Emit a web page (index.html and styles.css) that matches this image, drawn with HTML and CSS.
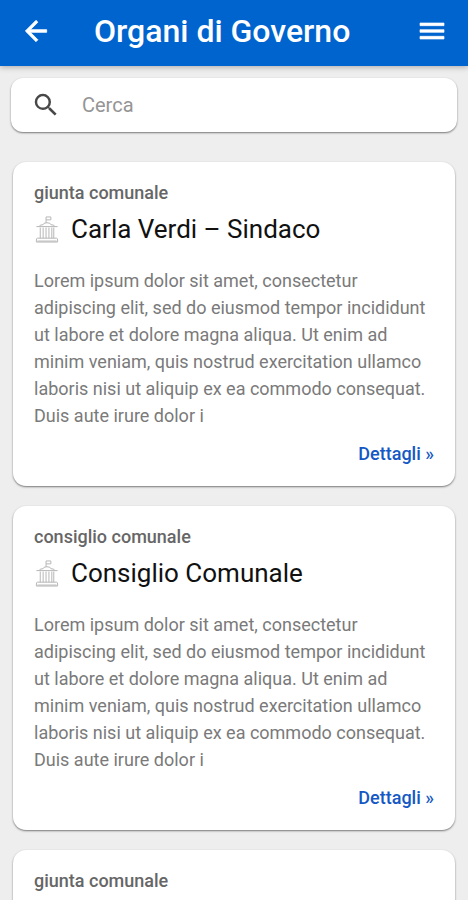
FILE: index.html
```html
<!DOCTYPE html>
<html lang="it">
<head>
  <meta charset="UTF-8">
  <meta name="viewport" content="width=device-width, initial-scale=1">
  <title>Organi di Governo</title>
  <link rel="stylesheet" href="styles.css">
</head>
<body>
  <svg class="sprite" aria-hidden="true">
    <symbol id="palazzo" viewBox="0 0 24 28">
      <path d="M11 7V1h5v3h-5M4 11q0-2 4-2 0-2 4-2t4 2q4 0 4 2M1 11h22M5 12v11M8 12v11M11 12v11M14 12v11M17 12v11M19 12v11M2 23h20q1 0 1 2v2H1v-2q0-2 1-2zM2 26h20"/>
    </symbol>
  </svg>

  <header class="topbar">
    <button class="icon-btn" aria-label="Indietro">
      <svg width="32" height="32" viewBox="0 0 24 24"><path fill="currentColor" stroke="currentColor" stroke-width=".6" d="M20 11H7.83l5.59-5.59L12 4l-8 8 8 8 1.41-1.41L7.83 13H20v-2z"/></svg>
    </button>
    <h1>Organi di Governo</h1>
    <button class="icon-btn" aria-label="Menu">
      <svg width="32" height="32" viewBox="0 0 24 24"><path fill="currentColor" stroke="currentColor" stroke-width=".5" d="M3 18h18v-2H3v2zm0-5h18v-2H3v2zm0-7v2h18V6H3z"/></svg>
    </button>
  </header>

  <main>
    <form class="search">
      <svg width="30" height="30" viewBox="0 0 24 24" aria-hidden="true"><path fill="currentColor" d="M15.5 14h-.79l-.28-.27A6.47 6.47 0 0 0 16 9.5 6.5 6.5 0 1 0 9.5 16c1.61 0 3.09-.59 4.23-1.57l.27.28v.79l5 4.99L20.49 19l-4.99-5zm-6 0C7.01 14 5 11.99 5 9.5S7.01 5 9.5 5 14 7.01 14 9.5 11.99 14 9.5 14z"/></svg>
      <input type="search" placeholder="Cerca" aria-label="Cerca">
    </form>

    <div class="cards">
      <article class="card">
        <div class="category">giunta comunale</div>
        <h2><svg class="palazzo"><use href="#palazzo"/></svg>Carla Verdi – Sindaco</h2>
        <p>Lorem ipsum dolor sit amet, consectetur adipiscing elit, sed do eiusmod tempor incididunt ut labore et dolore magna aliqua. Ut enim ad minim veniam, quis nostrud exercitation ullamco laboris nisi ut aliquip ex ea commodo consequat. Duis aute irure dolor i</p>
        <a class="details" href="#">Dettagli »</a>
      </article>

      <article class="card">
        <div class="category">consiglio comunale</div>
        <h2><svg class="palazzo"><use href="#palazzo"/></svg>Consiglio Comunale</h2>
        <p>Lorem ipsum dolor sit amet, consectetur adipiscing elit, sed do eiusmod tempor incididunt ut labore et dolore magna aliqua. Ut enim ad minim veniam, quis nostrud exercitation ullamco laboris nisi ut aliquip ex ea commodo consequat. Duis aute irure dolor i</p>
        <a class="details" href="#">Dettagli »</a>
      </article>

      <article class="card">
        <div class="category">giunta comunale</div>
      </article>
    </div>
  </main>
</body>
</html>
```

FILE: styles.css
```css
* {
  box-sizing: border-box;
}
body {
  margin: 0;
  height: 100vh;
  display: flex;
  flex-direction: column;
  background: #eee;
  font-family: Roboto, "Liberation Sans", sans-serif;
}
.sprite {
  display: none;
}
.topbar {
  display: flex;
  align-items: center;
  flex: none;
  height: 66px;
  padding: 0 20px 4px;
  background: #0064cf;
  color: #fff;
  box-shadow: 0 1px 6px rgba(0, 0, 0, 0.3);
  z-index: 1;
}
.topbar h1 {
  flex: 1;
  margin: 0 0 0 42px;
  font-size: 32px;
  font-weight: 500;
  line-height: 40px;
}
.icon-btn {
  display: flex;
  padding: 0;
  border: 0;
  background: none;
  color: inherit;
}
main {
  flex: 1;
  overflow-y: auto;
  scrollbar-width: none;
  padding: 12px 11px 0;
}
.search {
  display: flex;
  align-items: center;
  height: 54px;
  padding: 0 20px;
  border-radius: 12px;
  background: #fff;
  color: #484848;
  box-shadow: 0 1px 2px rgba(0, 0, 0, 0.5);
}
.search input {
  flex: 1;
  min-width: 0;
  margin-left: 21px;
  padding: 0;
  border: 0;
  outline: 0;
  background: none;
  color: #333;
  font-family: inherit;
  font-size: 20px;
}
.search input::placeholder {
  color: #959595;
}
.cards {
  display: flex;
  flex-direction: column;
  gap: 20px;
  padding: 30px 2px 20px;
}
.card {
  display: flex;
  flex-direction: column;
  min-height: 324px;
  padding: 20px 21px 21px;
  border-radius: 13px;
  background: #fff;
  box-shadow: 0 1px 2px rgba(0, 0, 0, 0.5);
}
.category {
  color: #666;
  font-size: 18px;
  font-weight: 500;
  line-height: 22px;
}
.card h2 {
  display: flex;
  align-items: center;
  margin: 8px 0 20px;
  color: #111;
  font-size: 26px;
  font-weight: 400;
  line-height: 35px;
}
.palazzo {
  width: 24px;
  height: 27px;
  margin-left: 1px;
  margin-right: 12px;
  fill: none;
  stroke: #b4b4b4;
  stroke-width: 1;
}
.card p {
  margin: 0;
  color: #7a7a7a;
  font-size: 18px;
  line-height: 27px;
}
.details {
  align-self: flex-end;
  margin-top: 14px;
  color: #1458c4;
  font-size: 18px;
  font-weight: 500;
  line-height: 22px;
  text-decoration: none;
}
```
